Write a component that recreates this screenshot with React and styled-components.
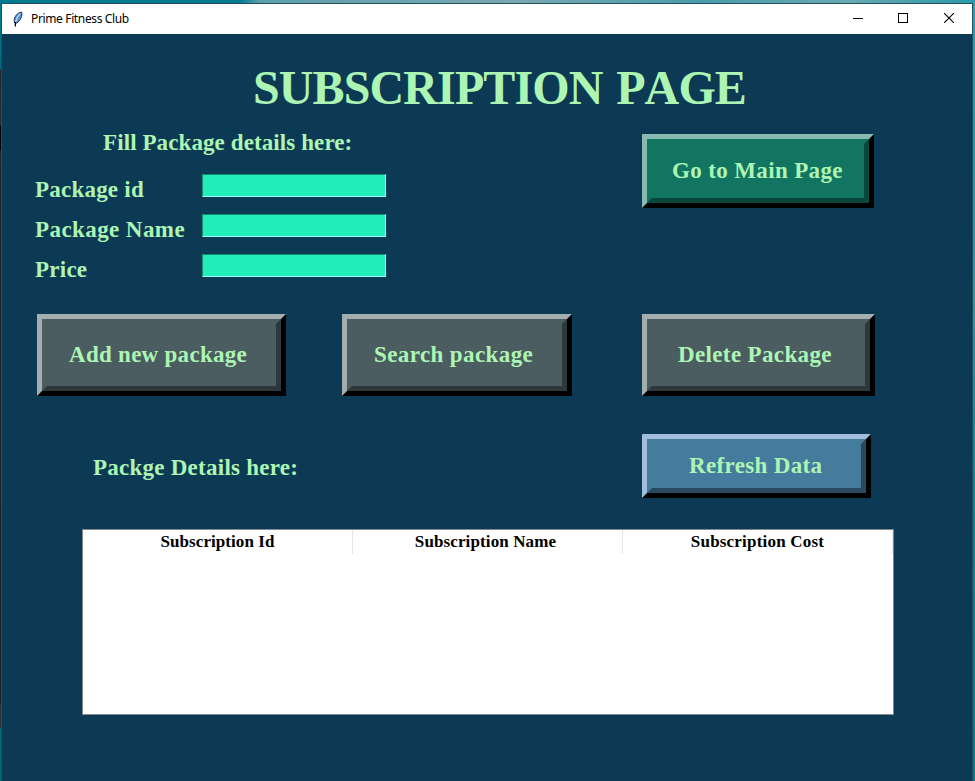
import React from "react";
import styled, { createGlobalStyle } from "styled-components";

const GlobalStyle = createGlobalStyle`
  * { box-sizing: border-box; }
  html, body { margin: 0; padding: 0; overflow: hidden; }
`;

const Desktop = styled.div`
  width: 975px;
  height: 781px;
  overflow: hidden;
  padding: 3px 2px 0 1px;
  background:
    linear-gradient(90deg, #007c92 0, #007c92 240px, #5f9fac 260px, #78a9b3 520px, #4a9dac 700px, #69a9b3 850px, #2a9aaa 975px) 0 0 / 975px 3px no-repeat,
    linear-gradient(180deg, #2f9cae 0, #2196a8 160px, #39929c 300px, #078599 480px, #007a8e 781px) 973px 0 / 2px 781px no-repeat,
    linear-gradient(180deg, #007c90 0, #006b7c 69px, #262626 70px, #2c2c2c 125px, #050505 126px, #050505 150px, #242424 151px, #202020 704px, #333 705px, #333 727px, #006d7d 729px, #006a7a 781px) 0 0 / 2px 781px no-repeat;
`;

const Window = styled.main`
  height: 778px;
  border: 1px solid #234f5c;
  border-bottom: 0;
  background: #0c3953;
  color: #adf5b3;
  font-family: "Liberation Serif", "Times New Roman", serif;
  font-weight: 700;
`;

const TitleBar = styled.header`
  display: flex;
  align-items: center;
  height: 30px;
  padding-left: 10px;
  background: #fff;
  color: #000;
`;

const AppName = styled.span`
  flex: 1;
  padding-left: 6px;
  font: 400 12px/30px "Noto Sans", "Open Sans", sans-serif;
  letter-spacing: ${(p) => p.$spacing}px;
`;

const WindowControl = styled.span`
  display: flex;
  align-items: center;
  justify-content: center;
  width: ${(p) => p.$width || 46}px;
  height: 30px;
  padding-bottom: 2px;
`;

const Page = styled.div`
  padding: 26px 0 0 33px;
`;

const PageTitle = styled.h1`
  margin: 0 0 0 218px;
  height: 56px;
  font-size: 48px;
  line-height: 56px;
  font-kerning: none;
  letter-spacing: ${(p) => p.$spacing}px;
  word-spacing: 2.5px;
  white-space: nowrap;
`;

const Label = styled.span`
  display: block;
  font-size: 23px;
  line-height: 26px;
  letter-spacing: ${(p) => p.$spacing}px;
  white-space: nowrap;
`;

const FormSection = styled.section`
  display: grid;
  grid-template-columns: 607px auto;
  justify-content: start;
  align-items: start;
  height: 198px;
  padding-top: 14px;
`;

const Heading = styled.div`
  padding-left: ${(p) => p.$indent}px;
`;

const Fields = styled.div`
  display: grid;
  grid-auto-rows: 40px;
  padding-top: 18px;
`;

const Field = styled.label`
  display: grid;
  grid-template-columns: 167px 184px;
  align-items: start;
`;

const FieldLabel = styled(Label)`
  padding-top: 3px;
`;

const Entry = styled.input`
  width: 184px;
  height: 23px;
  margin: 0;
  padding: 0 4px;
  border: 1px solid;
  border-color: #138e6f #a4ffff #a4ffff #138e6f;
  border-radius: 0;
  background: #20edba;
  outline: none;
`;

const Navigation = styled.nav`
  padding-top: 4px;
`;

const tones = {
  green: { face: "#117562", light: "#88bab0", dark: "#0a463b" },
  slate: { face: "#4b5d60", light: "#a5aeaf", dark: "#2d383a" },
  blue: { face: "#457b9d", light: "#a2bddb", dark: "#294a5e" },
};

const BevelButton = styled.button`
  display: block;
  width: ${(p) => p.$width}px;
  height: ${(p) => p.$height}px;
  margin: 0;
  padding: 0;
  border: 5px solid;
  border-color: ${(p) => tones[p.$tone].light} #000 #000 ${(p) => tones[p.$tone].light};
  border-radius: 0;
  background: ${(p) => tones[p.$tone].face};
  color: inherit;
  font: inherit;
`;

const ButtonFace = styled.span`
  display: flex;
  align-items: center;
  height: 100%;
  padding-left: ${(p) => p.$indent}px;
  border: 5px solid;
  border-color: ${(p) => `${tones[p.$tone].face} ${tones[p.$tone].dark} ${tones[p.$tone].dark} ${tones[p.$tone].face}`};
`;

const Actions = styled.section`
  display: grid;
  grid-template-columns: 305px 300px auto;
  justify-content: start;
  height: 120px;
  padding-left: 2px;
`;

const DetailsBar = styled.section`
  display: grid;
  grid-template-columns: 607px auto;
  justify-content: start;
  height: 95px;
`;

const DetailsHeading = styled(Heading)`
  padding-top: 21px;
`;

const Table = styled.section`
  width: 812px;
  height: 186px;
  margin-left: 47px;
  border: 1px solid #828790;
  background: #fff;
  color: #000;
`;

const TableHead = styled.div`
  display: grid;
  grid-template-columns: repeat(3, 270px);
  height: 24px;
`;

const HeadCell = styled.div`
  padding-right: ${(p) => p.$nudge || 0}px;
  border-right: 1px solid #e5e5e5;
  text-align: center;
  font-size: 17px;
  line-height: 23px;
  letter-spacing: ${(p) => p.$spacing}px;
`;

function Feather() {
  return (
    <svg width="13" height="16" viewBox="0 0 13 16">
      <path d="M2.6 12C1 8 4 2 9.6 1c1 4-1 8-4.6 11z" fill="#5a92d8" stroke="#1c2f4a" strokeWidth="1" />
      <path d="M8.4 2.4C5.4 5 4.4 8 3.6 11" fill="none" stroke="#b9dcff" strokeWidth="1.2" />
      <path d="M3.4 11v4.5" stroke="#000" strokeWidth="1.3" />
    </svg>
  );
}

function Bevel({ tone, width, height, indent, spacing, children }) {
  return (
    <BevelButton $tone={tone} $width={width} $height={height}>
      <ButtonFace $tone={tone} $indent={indent}>
        <Label $spacing={spacing}>{children}</Label>
      </ButtonFace>
    </BevelButton>
  );
}

const fields = [
  { label: "Package id", spacing: 0.22 },
  { label: "Package Name", spacing: 0.42 },
  { label: "Price", spacing: 0.25 },
];

export default function App() {
  return (
    <Desktop>
      <GlobalStyle />
      <Window>
        <TitleBar>
          <Feather />
          <AppName $spacing={-0.36}>Prime Fitness Club</AppName>
          <WindowControl $width={44}>
            <svg width="10" height="10" shapeRendering="crispEdges"><path d="M0 5.5h10" stroke="#000" /></svg>
          </WindowControl>
          <WindowControl>
            <svg width="10" height="10" shapeRendering="crispEdges"><path d="M.5.5h9v9h-9z" fill="none" stroke="#000" /></svg>
          </WindowControl>
          <WindowControl>
            <svg width="10" height="10"><path d="M0 0l10 10m0-10l-10 10" stroke="#000" strokeWidth="1.1" /></svg>
          </WindowControl>
        </TitleBar>
        <Page>
          <PageTitle $spacing={-0.88}>SUBSCRIPTION PAGE</PageTitle>
          <FormSection>
            <div>
              <Heading $indent={68}><Label $spacing={0.1}>Fill Package details here:</Label></Heading>
              <Fields>
                {fields.map((f) => (
                  <Field key={f.label}>
                    <FieldLabel $spacing={f.spacing}>{f.label}</FieldLabel>
                    <Entry />
                  </Field>
                ))}
              </Fields>
            </div>
            <Navigation>
              <Bevel tone="green" width={232} height={74} indent={20} spacing={0.36}>Go to Main Page</Bevel>
            </Navigation>
          </FormSection>
          <Actions>
            <Bevel tone="slate" width={249} height={82} indent={22} spacing={0.28}>Add new package</Bevel>
            <Bevel tone="slate" width={230} height={82} indent={22} spacing={0.4}>Search package</Bevel>
            <Bevel tone="slate" width={233} height={82} indent={26} spacing={0.36}>Delete Package</Bevel>
          </Actions>
          <DetailsBar>
            <DetailsHeading $indent={58}><Label $spacing={0.25}>Packge Details here:</Label></DetailsHeading>
            <Bevel tone="blue" width={229} height={64} indent={37} spacing={0.34}>Refresh Data</Bevel>
          </DetailsBar>
          <Table>
            <TableHead>
              <HeadCell $spacing={0.07}>Subscription Id</HeadCell>
              <HeadCell $spacing={0.12} $nudge={4}>Subscription Name</HeadCell>
              <HeadCell $spacing={0.2}>Subscription Cost</HeadCell>
            </TableHead>
          </Table>
        </Page>
      </Window>
    </Desktop>
  );
}
